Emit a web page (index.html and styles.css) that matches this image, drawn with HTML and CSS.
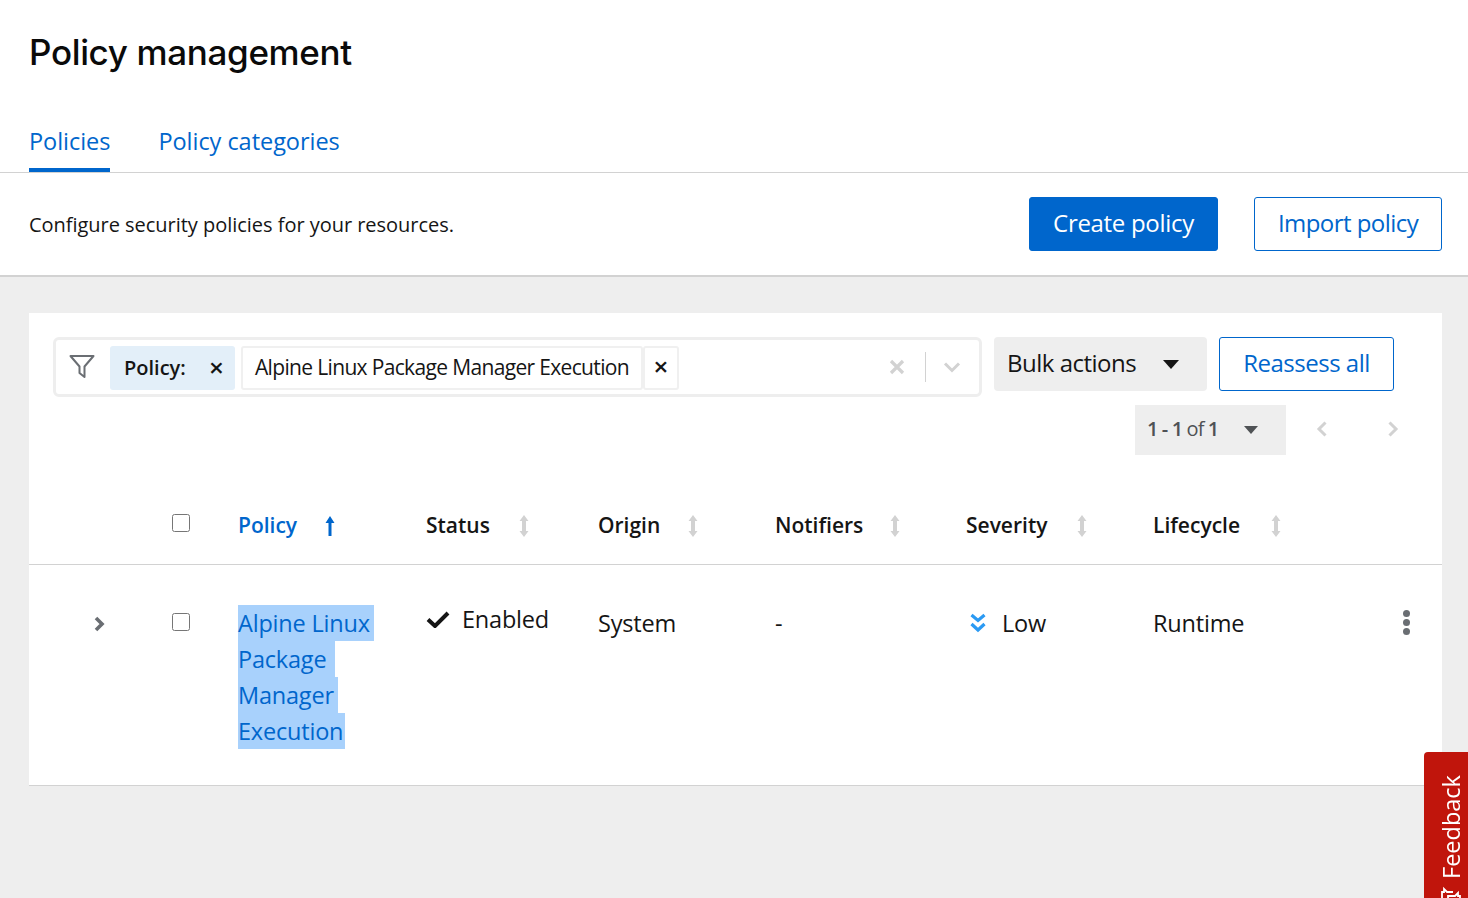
FILE: index.html
```html
<!DOCTYPE html>
<html lang="en">
<head>
    <meta charset="UTF-8">
    <title>Policy management</title>
    <link rel="stylesheet" href="styles.css">
</head>
<body>
    <header class="page-header">
        <h1>Policy management</h1>
        <nav class="tabs">
            <a class="tab tab-active">Policies</a>
            <a class="tab">Policy categories</a>
        </nav>
    </header>

    <section class="intro">
        <p>Configure security policies for your resources.</p>
        <div class="intro-actions">
            <button class="btn btn-primary">Create policy</button>
            <button class="btn btn-secondary btn-import">Import policy</button>
        </div>
    </section>

    <main class="content">
        <div class="card">
            <div class="toolbar">
                <div class="filter-box">
                    <svg class="filter-icon" width="26" height="26" viewBox="0 0 26 26"><path d="M1.5 3h23l-9 10.500V24l-5-4v-6.500z" fill="none" stroke="#6a6e73" stroke-width="2" stroke-linejoin="round"/></svg>
                    <div class="chip-label">
                        <span class="chip-name">Policy:</span>
                        <span class="chip-x">×</span>
                    </div>
                    <div class="chip-value">
                        <span class="chip-text">Alpine Linux Package Manager Execution</span>
                        <span class="chip-remove">×</span>
                    </div>
                    <div class="filter-end">
                        <svg class="filter-clear" width="16" height="16" viewBox="0 0 16 16"><path d="M2 2l12 12M14 2L2 14" stroke="#d2d2d2" stroke-width="3.200"/></svg>
                        <span class="filter-sep"></span>
                        <svg width="18" height="12" viewBox="0 0 18 12"><path d="M2 2.500l7 7 7-7" fill="none" stroke="#d2d2d2" stroke-width="3"/></svg>
                    </div>
                </div>
                <button class="bulk"><span>Bulk actions</span> <svg width="16" height="9" viewBox="0 0 16 9"><path d="M0 0h16L8 9z" fill="#151515"/></svg></button>
                <button class="btn btn-secondary btn-reassess">Reassess all</button>
            </div>

            <div class="pager">
                <div class="pager-count"><span class="pager-text"><b>1 - 1</b> of <b>1</b></span> <svg width="14" height="8" viewBox="0 0 14 8"><path d="M0 0h14L7 8z" fill="#4f5255"/></svg></div>
                <svg class="pager-arrow" width="12" height="18" viewBox="0 0 12 18"><path d="M9.500 2.500L3 9l6.500 6.500" fill="none" stroke="#d2d2d2" stroke-width="3"/></svg>
                <svg class="pager-arrow" width="12" height="18" viewBox="0 0 12 18"><path d="M2.500 2.500L9 9l-6.500 6.500" fill="none" stroke="#d2d2d2" stroke-width="3"/></svg>
            </div>

            <table class="policy-table">
                <thead>
                    <tr>
                        <th class="col-expand"></th>
                        <th class="col-check"><input type="checkbox"></th>
                        <th class="col-policy sorted">Policy <svg class="sort" width="12" height="20" viewBox="0 0 12 20"><path d="M6 0L1.500 7h3V20h3V7h3z" fill="#06c"/></svg></th>
                        <th class="col-status">Status <svg class="sort" width="12" height="22" viewBox="0 0 12 22"><path d="M6 0L1.500 6h2.500v10H1.500L6 22l4.500-6H8V6h2.500z" fill="#d2d2d2"/></svg></th>
                        <th class="col-origin">Origin <svg class="sort" width="12" height="22" viewBox="0 0 12 22"><path d="M6 0L1.500 6h2.500v10H1.500L6 22l4.500-6H8V6h2.500z" fill="#d2d2d2"/></svg></th>
                        <th class="col-notifiers">Notifiers <svg class="sort" width="12" height="22" viewBox="0 0 12 22"><path d="M6 0L1.500 6h2.500v10H1.500L6 22l4.500-6H8V6h2.500z" fill="#d2d2d2"/></svg></th>
                        <th class="col-severity">Severity <svg class="sort" width="12" height="22" viewBox="0 0 12 22"><path d="M6 0L1.500 6h2.500v10H1.500L6 22l4.500-6H8V6h2.500z" fill="#d2d2d2"/></svg></th>
                        <th class="col-lifecycle">Lifecycle <svg class="sort" width="12" height="22" viewBox="0 0 12 22"><path d="M6 0L1.500 6h2.500v10H1.500L6 22l4.500-6H8V6h2.500z" fill="#d2d2d2"/></svg></th>
                        <th class="col-menu"></th>
                    </tr>
                </thead>
                <tbody>
                    <tr>
                        <td class="cell-expand"><svg width="12" height="16" viewBox="0 0 12 16"><path d="M3 2l6 6-6 6" fill="none" stroke="#6a6e73" stroke-width="3.600"/></svg></td>
                        <td class="cell-check"><input type="checkbox"></td>
                        <td class="cell-policy">
                            <a class="sel"><span class="sel-1">Alpine Linux</span><span class="sel-2">Package</span><span class="sel-3">Manager</span><span class="sel-4">Execution</span></a>
                        </td>
                        <td class="cell-status"><div class="status"><svg width="24" height="18" viewBox="0 0 24 18"><path d="M2 9.500l7 6.500L22 3" fill="none" stroke="#151515" stroke-width="4"/></svg> Enabled</div></td>
                        <td>System</td>
                        <td>-</td>
                        <td><div class="severity"><svg width="16" height="20" viewBox="0 0 16 20"><path d="M1.500 2l6.500 5.500L14.500 2M1.500 11l6.500 6L14.500 11" fill="none" stroke="#2b9af3" stroke-width="3.200"/></svg> Low</div></td>
                        <td>Runtime</td>
                        <td class="cell-menu"><span class="kebab"><i></i><i></i><i></i></span></td>
                    </tr>
                </tbody>
            </table>
        </div>
    </main>

    <button class="feedback"><svg width="22" height="22" viewBox="0 0 22 22"><path d="M2 3h12v8H7l-3 3v-3H2zM16 7h4v8h-2v3l-3-3H9" fill="none" stroke="#fff" stroke-width="1.800"/></svg>Feedback</button>
</body>
</html>
```

FILE: styles.css
```css
* {
    box-sizing: border-box;
}

html, body {
    height: 100%;
}

body {
    margin: 0;
    font-family: "Open Sans", "Noto Sans", sans-serif;
    color: #151515;
    background-color: #eee;
    overflow: hidden;
}

button {
    font-family: inherit;
    cursor: pointer;
}

/* header */
.page-header {
    background-color: #fff;
    height: 173px;
    padding: 29px 29px 0;
    border-bottom: 1px solid #d2d2d2;
}

h1 {
    margin: 0;
    font-family: Inter, sans-serif;
    font-size: 35px;
    line-height: 47px;
    font-weight: 500;
    letter-spacing: -0.350px;
    color: #0a0a0a;
}

.tabs {
    display: flex;
    gap: 48px;
    margin-top: 30px;
}

.tab {
    height: 66px;
    padding-top: 19px;
    font-size: 23.500px;
    line-height: 32px;
    letter-spacing: -0.040px;
    color: #06c;
}

.tab-active {
    height: 66px;
    border-bottom: 4px solid #06c;
}

/* intro row */
.intro {
    display: flex;
    align-items: center;
    justify-content: space-between;
    height: 104px;
    padding: 0 26px 0 29px;
    background-color: #fff;
    border-bottom: 2px solid #d2d2d2;
}

.intro p {
    margin: 0;
    font-size: 20px;
    letter-spacing: -0.030px;
}

.intro-actions {
    display: flex;
    gap: 36px;
}

.btn {
    width: 189px;
    height: 54px;
    padding: 0 0 3px;
    font-size: 24px;
    letter-spacing: -0.300px;
    border-radius: 3px;
}

.btn-primary {
    background-color: #06c;
    border: 1px solid #06c;
    color: #fff;
}

.btn-secondary {
    background-color: #fff;
    border: 1px solid #06c;
    color: #06c;
}

.btn-import {
    width: 188px;
    letter-spacing: -0.550px;
}

/* card */
.content {
    padding: 36px 26px 0 29px;
}

.card {
    height: 473px;
    padding-top: 24px;
    background-color: #fff;
    border-bottom: 1px solid #d2d2d2;
}

.toolbar {
    display: flex;
    align-items: flex-start;
    padding-left: 24px;
}

.filter-box {
    display: flex;
    align-items: center;
    width: 929px;
    height: 60px;
    padding: 2px 0 0 13px;
    border: 3px solid #eee;
    border-radius: 6px;
}

.filter-icon {
    margin: -4px 15px 0 0;
}

.chip-label {
    display: flex;
    align-items: center;
    width: 125px;
    height: 44px;
    margin-right: 6px;
    padding-left: 14px;
    background-color: #e3eff9;
    border-radius: 3px;
    font-size: 20px;
}

.chip-name {
    width: 79px;
    padding-bottom: 2px;
    font-weight: 600;
    letter-spacing: 0;
}

.chip-x, .chip-remove {
    font-size: 26px;
    line-height: 1;
    font-weight: 600;
    text-align: center;
}

.chip-x {
    width: 27px;
    padding-bottom: 2px;
}

.chip-value {
    display: flex;
    height: 44px;
    font-size: 21px;
}

.chip-text {
    display: flex;
    align-items: center;
    width: 402px;
    padding: 0 0 3px 12px;
    border: 2px solid #f0f0f0;
    border-radius: 3px;
    white-space: nowrap;
    letter-spacing: -0.660px;
}

.chip-remove {
    width: 36px;
    padding-top: 5px;
    border: 2px solid #f0f0f0;
    border-radius: 3px;
}

.filter-end {
    display: flex;
    align-items: center;
    gap: 17px;
    margin: -2px 18px 0 auto;
}

.filter-clear {
    margin-right: 3px;
}

.filter-sep {
    width: 1px;
    height: 30px;
    background-color: #d2d2d2;
}

.bulk {
    display: flex;
    align-items: center;
    justify-content: space-between;
    width: 213px;
    height: 54px;
    margin-left: 12px;
    padding: 0 28px 0 13px;
    background-color: #eee;
    border: 0;
    border-radius: 4px;
    font-size: 24px;
    letter-spacing: -0.500px;
    color: #151515;
}

.bulk span {
    padding-bottom: 3px;
}

.btn-reassess {
    margin-left: 12px;
    width: 175px;
    letter-spacing: -0.500px;
}

/* pagination */
.pager {
    display: flex;
    align-items: center;
    justify-content: flex-end;
    margin-top: 8px;
    padding-right: 43px;
}

.pager-count {
    display: flex;
    align-items: center;
    justify-content: space-between;
    width: 151px;
    height: 50px;
    margin-right: 1px;
    padding: 0 28px 0 12px;
    background-color: #eee;
    font-size: 20px;
    letter-spacing: -0.900px;
    color: #4f5255;
}

.pager-text {
    padding-bottom: 3px;
}

.pager-count b {
    font-weight: 600;
}

.pager-arrow {
    margin: -2px 0 0 29px;
}

.pager-arrow + .pager-arrow {
    margin-left: 59px;
}

/* table */
.policy-table {
    width: 100%;
    margin-top: 18px;
    border-collapse: collapse;
    table-layout: fixed;
}

.policy-table th {
    height: 91px;
    padding: 13px 0 0;
    text-align: left;
    font-size: 21px;
    font-weight: 600;
    letter-spacing: 0;
    border-bottom: 1px solid #d2d2d2;
}

.policy-table th .sort {
    margin: -2px 0 0 23px;
    vertical-align: middle;
}

.policy-table th.col-policy .sort { margin-left: 21px; }
.policy-table th.col-origin .sort { margin-left: 21px; }
.policy-table th.col-notifiers .sort { margin-left: 20px; }
.policy-table th.col-lifecycle .sort { margin-left: 25px; }

.policy-table td {
    padding: 40px 0 0;
    height: 220px;
    vertical-align: top;
    font-size: 23.500px;
    line-height: 36px;
    letter-spacing: -0.200px;
}

.col-expand { width: 143px; }
.col-check { width: 66px; }
.col-policy { width: 188px; }
.col-status { width: 172px; }
.col-origin { width: 177px; }
.col-notifiers { width: 191px; }
.col-severity { width: 187px; }
.col-lifecycle { width: 220px; }

.sorted {
    color: #06c;
}

input[type="checkbox"] {
    width: 18px;
    height: 18px;
    margin: 0;
    vertical-align: middle;
}

.col-check input {
    margin-top: -9px;
}

.policy-table td.cell-expand {
    padding-left: 64px;
}

.cell-expand svg {
    margin-top: -2px;
}

.cell-check input {
    margin-top: -7px;
}

.sel {
    display: flex;
    flex-direction: column;
    align-items: flex-start;
    color: #06c;
}

.sel span {
    height: 36px;
    background-color: #a8d1fc;
    white-space: nowrap;
}

.sel .sel-1 { padding-right: 4px; }
.sel .sel-2 { padding-right: 9px; }
.sel .sel-3 { padding-right: 4px; }
.sel .sel-4 { padding-right: 2px; }

.status {
    display: flex;
    align-items: center;
    gap: 12px;
    margin-top: -4px;
}

.severity {
    display: flex;
    align-items: center;
    gap: 16px;
    margin-left: 4px;
}

.kebab {
    display: flex;
    flex-direction: column;
    align-items: center;
    gap: 2px;
    width: 8px;
    margin-left: 29px;
    padding-top: 5px;
}

.kebab i {
    width: 7px;
    height: 7px;
    border-radius: 50%;
    background-color: #6a6e73;
}

/* feedback tab */
.feedback {
    position: fixed;
    top: 752px;
    right: 0;
    display: flex;
    align-items: center;
    gap: 6px;
    width: 44px;
    height: 170px;
    padding: 15px 10px 0 0;
    background-color: #c0150c;
    color: #fff;
    border: 0;
    border-radius: 0 4px 4px 0;
    font-size: 23.500px;
    writing-mode: vertical-rl;
    transform: rotate(180deg);
    justify-content: flex-start;
    transform-origin: center;
}
```
